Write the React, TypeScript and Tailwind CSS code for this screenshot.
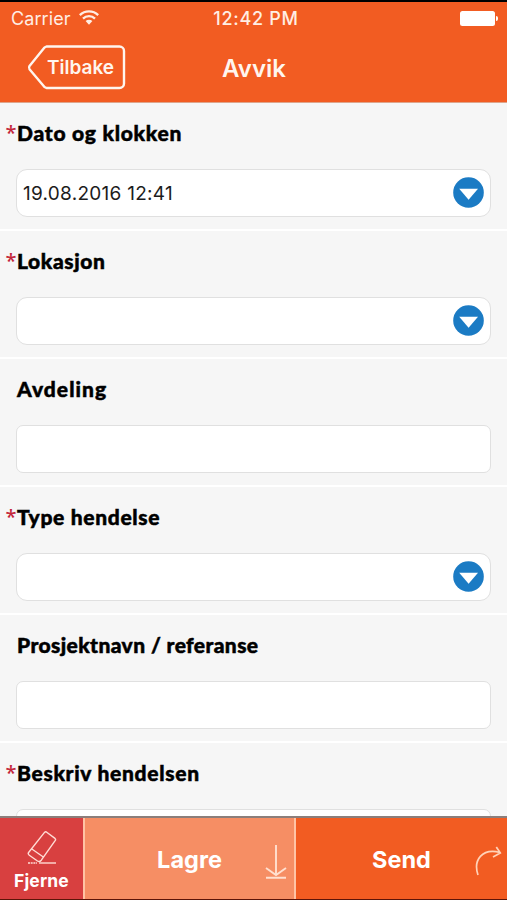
import React, { useState } from "react"
import clsx from "clsx"

type Field = {
    label: string
    tracking: string
    required?: boolean
    dropdown?: boolean
    value?: string
}

const fields: Field[] = [
    {
        label: "Dato og klokken",
        tracking: "tracking-[0.75px]",
        required: true,
        dropdown: true,
        value: "19.08.2016 12:41",
    },
    {
        label: "Lokasjon",
        tracking: "tracking-[0.6px]",
        required: true,
        dropdown: true,
    },
    { label: "Avdeling", tracking: "tracking-[1.05px]" },
    {
        label: "Type hendelse",
        tracking: "tracking-[0.67px]",
        required: true,
        dropdown: true,
    },
    { label: "Prosjektnavn / referanse", tracking: "tracking-[0.4px]" },
    {
        label: "Beskriv hendelsen",
        tracking: "tracking-[0.7px]",
        required: true,
    },
]

const StatusBar = () => (
    <div className="flex h-[33px] items-center justify-between pr-[9px] pl-[11px] text-[18px] text-[#ffeee4]">
        <div className="flex w-[120px] items-center gap-[8px]">
            <span className="tracking-[0.1px]">Carrier</span>
            <svg
                className="-mt-[2px]"
                width="20"
                height="15"
                viewBox="0 0 20 15"
                fill="none"
            >
                <path
                    d="M.8 5.100a13 13 0 0 1 18.400 0M4 8.600a8.500 8.500 0 0 1 12 0"
                    stroke="currentColor"
                    strokeWidth="2.3"
                />
                <path
                    d="M6.600 11.100a4.900 4.900 0 0 1 6.800 0L10 14.800z"
                    fill="currentColor"
                />
            </svg>
        </div>
        <span className="font-medium tracking-[0.7px]">12:42 PM</span>
        <div className="flex w-[117px] items-center justify-end gap-px">
            <span className="h-[15px] w-[35px] rounded-[2.5px] bg-white" />
            <span className="h-[5px] w-[2px] rounded-r-full bg-white" />
        </div>
    </div>
)

const Header = () => (
    <header className="h-[103px] shrink-0 border-t-2 border-b border-t-black border-b-[#dda58c] bg-[#f25c22] text-[#fff5ee]">
        <StatusBar />
        <div className="relative flex h-[67px] items-center justify-center">
            <button className="absolute top-[10px] left-[27px] h-[45px] w-[99px] pt-[2px] pl-[8px] text-[19px] font-semibold">
                <svg
                    className="absolute inset-0"
                    width="99"
                    height="45"
                    viewBox="0 0 99 45"
                    fill="none"
                >
                    <path
                        d="M19.500 1.500H92.500a4.500 4.500 0 0 1 4.500 4.500V38.500a4.500 4.500 0 0 1-4.500 4.500H19.500L17.500 42 2.500 24.200Q1.500 22.500 2.500 21L17.500 2.500Z"
                        stroke="currentColor"
                        strokeWidth="2.4"
                        strokeLinejoin="round"
                    />
                </svg>
                Tilbake
            </button>
            <h1 className="pl-px text-[24px] font-semibold">Avvik</h1>
        </div>
    </header>
)

const FormRow = ({ label, tracking, required, dropdown, value }: Field) => {
    const [text, setText] = useState(value ?? "")

    return (
        <div className="h-[128px] shrink-0 border-b-2 border-white bg-[#f6f6f6] px-4 pt-[15px]">
            <label className="relative block h-[30px] pl-px font-[Lato,sans-serif] text-[21px] leading-[30px] font-black whitespace-nowrap text-black">
                {required && (
                    <span className="absolute -left-[10.5px] font-['Noto_Sans',sans-serif] text-[20px] font-medium text-[#c4283c]">
                        *
                    </span>
                )}
                <span
                    className={clsx(tracking, "[-webkit-text-stroke:0.5px_black]")}
                >
                    {label}
                </span>
            </label>
            <div
                className={clsx(
                    "mt-[21px] flex h-12 items-center border border-[#e0e0e0] bg-white pr-[6px] pl-[6px]",
                    dropdown ? "rounded-[11px]" : "rounded-[7px]"
                )}
            >
                <input
                    className="min-w-0 grow pt-[2px] text-[19px] tracking-[0.27px] text-[#1c1c1c] outline-none"
                    value={text}
                    onChange={(e) => setText(e.target.value)}
                />
                {dropdown && (
                    <svg
                        className="-mt-[2px]"
                        width="31"
                        height="31"
                        viewBox="0 0 31 31"
                    >
                        <circle cx="15.500" cy="15.500" r="15.300" fill="#1b7bc4" />
                        <path d="M6.200 11.700h18.800l-9.400 11z" fill="#fff" />
                    </svg>
                )}
            </div>
        </div>
    )
}

const Footer = () => (
    <footer className="flex h-[84px] shrink-0 border-t-2 border-b border-t-[#8b7e7b] border-b-[#5c1408] text-white">
        <button className="flex w-[83px] flex-col items-center bg-[#d84040] pt-[12px] text-[17.500px] leading-none font-bold">
            <svg
                width="30"
                height="34"
                viewBox="0 0 30 34"
                fill="none"
                stroke="#ffdcd5"
                strokeWidth="1.4"
                strokeLinejoin="round"
            >
                <path d="M17.500 2.400Q18.500 1.400 19.700 2.200L28 8.400Q29 9.300 28.300 10.400L14.300 30.200Q12.500 32.300 10.500 31L2.300 25.200Q.600 23.800 1.600 22.500ZM4.500 18.800 16.700 27.300" />
                <path d="M1 33h9" strokeDasharray="2 .7" />
                <path d="M12 33h17" />
            </svg>
            <span className="mt-[8px] tracking-[0.15px]">Fjerne</span>
        </button>
        <button className="relative w-[213px] border-x-2 border-x-[#ffc3a4] bg-[#f68e64] pt-[3px] text-[23.500px] font-bold">
            Lagre
            <svg
                className="absolute right-[7px] bottom-[20px]"
                width="22"
                height="34"
                viewBox="0 0 22 34"
                fill="none"
                stroke="#ffe0d0"
                strokeWidth="1.900"
            >
                <path d="M11 0v29M1 23l10 7 10-7M1 32.700h20" />
            </svg>
        </button>
        <button className="relative grow bg-[#f25c22] pt-[3px] text-[23.500px] font-bold">
            Send
            <svg
                className="absolute right-[5px] bottom-[23px]"
                width="28"
                height="30"
                viewBox="0 0 28 30"
                fill="none"
                stroke="#ffd2b8"
                strokeWidth="1.700"
            >
                <path d="M4 29C-1 14 8 2 26 6.500M22.300 1l4 6L19 11" />
            </svg>
        </button>
    </footer>
)

const App = () => {
    return (
        <div className="flex h-[900px] w-[507px] flex-col overflow-hidden bg-[#f6f6f6] font-[Inter,sans-serif]">
            <Header />
            <main className="flex min-h-0 grow flex-col overflow-hidden">
                {fields.map((field) => (
                    <FormRow key={field.label} {...field} />
                ))}
            </main>
            <Footer />
        </div>
    )
}

export default App
